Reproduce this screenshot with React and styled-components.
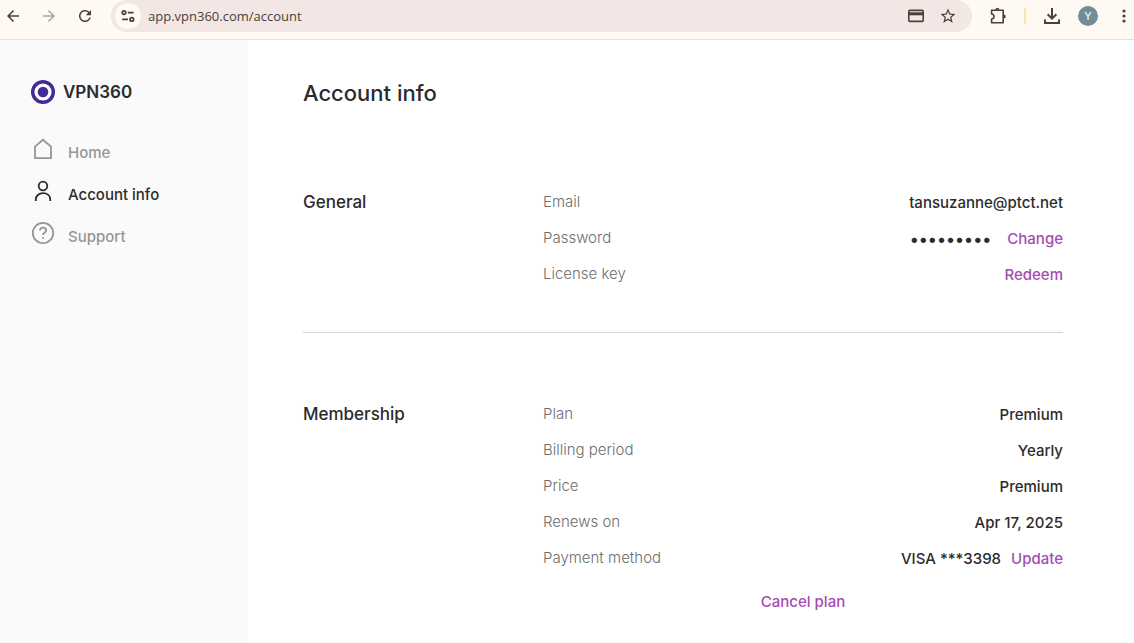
import React, { useState } from "react";
import styled, { createGlobalStyle } from "styled-components";
import { MdArrowBack, MdArrowForward, MdRefresh, MdStarBorder } from "react-icons/md";

const general = [
  { label: "Email", value: "tansuzanne@ptct.net" },
  { label: "Password", value: "•••••••••", dots: true, action: "Change" },
  { label: "License key", action: "Redeem" },
];

const membership = [
  { label: "Plan", value: "Premium" },
  { label: "Billing period", value: "Yearly" },
  { label: "Price", value: "Premium" },
  { label: "Renews on", value: "Apr 17, 2025" },
  { label: "Payment method", value: "VISA ***3398", action: "Update" },
];

const HomeIcon = () => (
  <Icon viewBox="0 0 24 24">
    <path d="M4 21.2V9.6L12 2.8L20 9.6V21.2Z" />
  </Icon>
);

const PersonIcon = () => (
  <Icon viewBox="0 0 24 24">
    <circle cx="12" cy="7" r="4.3" />
    <path d="M4.8 22V20.6C4.8 16.8 7.8 14.2 12 14.2S19.2 16.8 19.2 20.6V22" />
  </Icon>
);

const SupportIcon = () => (
  <Icon viewBox="0 0 24 24">
    <circle cx="12" cy="12" r="10.2" />
    <path d="M8.9 9.6C8.9 7.8 10.2 6.7 12 6.7S15.1 7.8 15.1 9.4C15.1 11.5 12.1 11.6 12.1 14" />
    <path d="M12.1 16V17.7" />
  </Icon>
);

const nav = [
  { name: "Home", icon: <HomeIcon /> },
  { name: "Account info", icon: <PersonIcon /> },
  { name: "Support", icon: <SupportIcon /> },
];

const Rows = ({ items }) => (
  <List>
    {items.map((item) => (
      <Row key={item.label}>
        <Label>{item.label}</Label>
        <Value>
          {item.value && <Text $dots={item.dots}>{item.value}</Text>}
          {item.action && <TextButton type="button">{item.action}</TextButton>}
        </Value>
      </Row>
    ))}
  </List>
);

const BrowserBar = () => {
  const [url, setUrl] = useState("app.vpn360.com/account");

  return (
    <Bar>
      <History>
        <IconButton aria-label="Back">
          <MdArrowBack size={18} />
        </IconButton>
        <IconButton aria-label="Forward" $faded>
          <MdArrowForward size={18} />
        </IconButton>
        <IconButton aria-label="Reload">
          <MdRefresh size={18} />
        </IconButton>
      </History>
      <AddressBar>
        <SiteButton aria-label="Site information">
          <svg width="16" height="16" viewBox="0 0 16 16" fill="none" stroke="currentColor" strokeWidth="1.7">
            <circle cx="4" cy="4.6" r="1.8" />
            <path d="M7.8 4.6H13.6M2.2 11.4H8" />
            <circle cx="11.8" cy="11.4" r="1.8" />
          </svg>
        </SiteButton>
        <Url
          aria-label="Address"
          value={url}
          onChange={(e) => setUrl(e.target.value)}
        />
        <IconButton aria-label="Payment methods">
          <svg width="18" height="18" viewBox="0 0 18 18" fill="none" stroke="currentColor" strokeWidth="1.6">
            <rect x="1.8" y="3.4" width="14.4" height="11" rx="1.2" />
            <path d="M2 6.8H16" strokeWidth="3" />
          </svg>
        </IconButton>
        <IconButton aria-label="Bookmark">
          <MdStarBorder size={18} />
        </IconButton>
      </AddressBar>
      <Tools>
        <IconButton aria-label="Extensions">
          <svg width="18" height="18" viewBox="0 0 18 18" fill="none" stroke="currentColor" strokeWidth="1.6">
            <path d="M2.6 3.3H14.2V15.7H2.6V12C5.8 11.8 5.8 7.2 2.6 7Z" strokeLinejoin="round" />
            <path d="M6.4 2.8A2 2 0 0 1 10.4 2.8ZM14.8 7.4A2 2 0 0 1 14.8 11.4Z" fill="currentColor" stroke="none" />
          </svg>
        </IconButton>
        <Divider />
        <IconButton aria-label="Downloads">
          <svg width="18" height="18" viewBox="0 0 18 18" fill="none" stroke="currentColor" strokeWidth="2">
            <path d="M9 1V11.4M4.6 7.2L9 11.6L13.4 7.2M2 12.6V16H16V12.6" />
          </svg>
        </IconButton>
        <Avatar aria-label="Profile">Y</Avatar>
        <IconButton aria-label="Menu">
          <svg width="18" height="18" viewBox="0 0 18 18" fill="currentColor">
            <circle cx="9" cy="4" r="1.6" />
            <circle cx="9" cy="9" r="1.6" />
            <circle cx="9" cy="14" r="1.6" />
          </svg>
        </IconButton>
      </Tools>
    </Bar>
  );
};

export default function App() {
  const [page, setPage] = useState("Account info");

  return (
    <Page>
      <GlobalStyle />
      <BrowserBar />
      <Content>
        <Sidebar>
          <Brand>
            <svg width="24" height="24" viewBox="0 0 24 24">
              <circle cx="12" cy="12" r="10.3" fill="#fff" stroke="#432a96" strokeWidth="3.4" />
              <circle cx="12" cy="12" r="5.3" fill="#432a96" />
            </svg>
            VPN360
          </Brand>
          <Nav>
            {nav.map((item) => (
              <NavLink
                href="#"
                key={item.name}
                $active={item.name === page}
                onClick={() => setPage(item.name)}
              >
                {item.icon}
                {item.name}
              </NavLink>
            ))}
          </Nav>
        </Sidebar>
        <Main>
          <Title>Account info</Title>
          <Section>
            <Heading>General</Heading>
            <Rows items={general} />
          </Section>
          <Section $last>
            <Heading>Membership</Heading>
            <div>
              <Rows items={membership} />
              <Cancel>
                <TextButton type="button">Cancel plan</TextButton>
              </Cancel>
            </div>
          </Section>
        </Main>
      </Content>
    </Page>
  );
}

const GlobalStyle = createGlobalStyle`
  * {
    box-sizing: border-box;
  }

  body {
    margin: 0;
    background: #fff;
    color: #2b2b2d;
    font-family: Inter, "Liberation Sans", sans-serif;
    font-size: 15px;
  }

  button,
  input {
    margin: 0;
    padding: 0;
    border: 0;
    background: none;
    color: inherit;
    font: inherit;
  }
`;

const Page = styled.div`
  min-height: 100vh;
  display: flex;
  flex-direction: column;
`;

const Bar = styled.header`
  display: flex;
  height: 40px;
  padding: 0 1px 7px 4px;
  background: #fff9f3;
  border-bottom: 1px solid #e9e0da;
  color: #4b4038;
`;

const History = styled.div`
  display: flex;
  align-items: center;
  gap: 18px;
  margin-right: 17px;
`;

const IconButton = styled.button`
  display: flex;
  opacity: ${(props) => (props.$faded ? 0.45 : 1)};
`;

const AddressBar = styled.div`
  flex: 1;
  display: flex;
  align-items: center;
  gap: 14px;
  padding: 0 15px 0 4px;
  background: #f2e7e4;
  border-radius: 16px;
`;

const SiteButton = styled.button`
  display: flex;
  align-items: center;
  justify-content: center;
  width: 26px;
  height: 26px;
  border-radius: 50%;
  background: #fff9f3;
`;

const Url = styled.input`
  flex: 1;
  min-width: 0;
  margin-left: -7px;
  font-family: "Open Sans", sans-serif;
  font-size: 13px;
  outline: none;
`;

const Tools = styled.div`
  display: flex;
  align-items: center;
  gap: 17px;
  margin-left: 17px;
`;

const Divider = styled.span`
  width: 2px;
  height: 16px;
  background: #fddfb8;
`;

const Avatar = styled.button`
  width: 20px;
  height: 20px;
  border-radius: 50%;
  background: #728d97;
  color: #fff;
  font-size: 11px;
  line-height: 20px;
`;

const Content = styled.div`
  flex: 1;
  display: flex;
`;

const Sidebar = styled.aside`
  width: 248px;
  padding: 40px 31px;
  background: #fafafa;
`;

const Brand = styled.div`
  display: flex;
  align-items: center;
  gap: 8px;
  font-size: 17px;
  font-weight: 600;
  line-height: 24px;
`;

const Nav = styled.nav`
  display: flex;
  flex-direction: column;
  gap: 10px;
  margin-top: 33px;
`;

const NavLink = styled.a`
  display: flex;
  gap: 13px;
  font-weight: 500;
  line-height: 32px;
  text-decoration: none;
  color: ${(props) => (props.$active ? "#2b2b2d" : "#969696")};
`;

const Icon = styled.svg`
  width: 24px;
  height: 24px;
  fill: none;
  stroke: currentColor;
  stroke-width: 1.8;
`;

const Main = styled.main`
  flex: 1;
  padding: 38px 71px 0 55px;
`;

const Title = styled.h1`
  margin: 0 0 76px;
  font-size: 22px;
  font-weight: 500;
  line-height: 30px;
`;

const Section = styled.section`
  display: grid;
  grid-template-columns: 240px 1fr;
  padding-bottom: ${(props) => (props.$last ? 0 : 40)}px;
  margin-bottom: ${(props) => (props.$last ? 0 : 63)}px;
  border-bottom: ${(props) => (props.$last ? "none" : "1px solid #d4d4d4")};
`;

const Heading = styled.h2`
  margin: 0;
  font-size: 17px;
  font-weight: 500;
  line-height: 37px;
`;

const List = styled.dl`
  margin: 0;
`;

const Row = styled.div`
  display: flex;
  justify-content: space-between;
  height: 36px;
  line-height: 36px;
`;

const Label = styled.dt`
  color: #6e6e6e;
  font-weight: 300;
`;

const Value = styled.dd`
  display: flex;
  gap: 10px;
  margin: 0;
  font-weight: 500;
  line-height: 38px;
`;

const Text = styled.span`
  margin-right: ${(props) => (props.$dots ? 6 : 0)}px;
  font-size: ${(props) => (props.$dots ? 17 : 15)}px;
`;

const TextButton = styled.button`
  color: #a44bb4;
  font-weight: 500;
`;

const Cancel = styled.div`
  text-align: center;
  line-height: 52px;
`;
